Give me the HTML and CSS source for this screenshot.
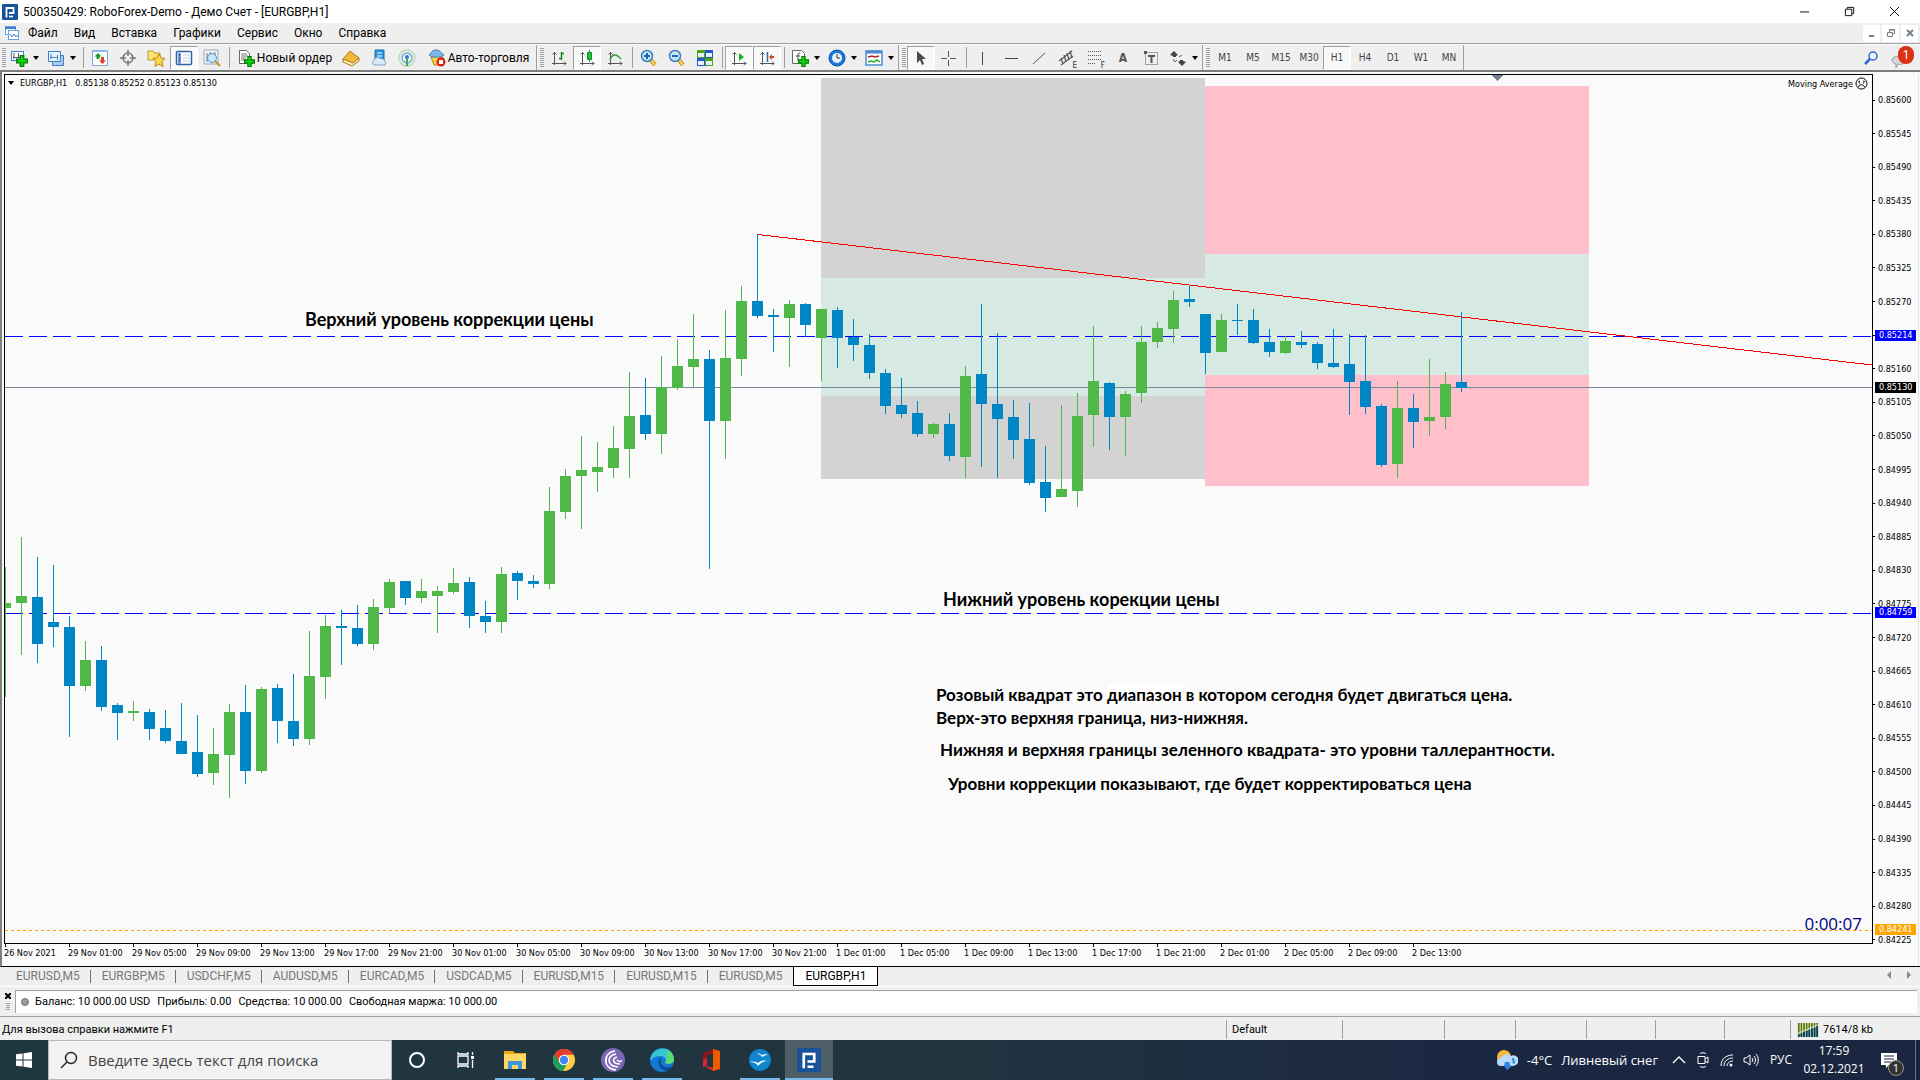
FILE: index.html
```html
<!DOCTYPE html>
<html lang="ru">
<head>
<meta charset="utf-8">
<title>500350429: RoboForex-Demo</title>
<link rel="stylesheet" href="styles.css">
</head>
<body>
<svg class="defs" aria-hidden="true">
  <defs>
    <symbol id="logo" viewBox="0 0 16 16"><rect width="16" height="16" rx="1" fill="#17529a"/><path d="M4.500 13.500V4h7v5H7" fill="none" stroke="#fff" stroke-width="1.800"/><path d="M7 12.500h4" stroke="#fff" stroke-width="1.600"/></symbol>
    <symbol id="plus" viewBox="0 0 10 10"><path d="M3.500.5h3v3h3v3h-3v3h-3v-3h-3v-3h3z" fill="#12d312" stroke="#067a06"/></symbol>
    <symbol id="caret" viewBox="0 0 6 4"><path d="M0 0h6L3 4z" fill="#000"/></symbol>
    <symbol id="axes" viewBox="0 0 16 16"><path d="M3.500 1v13M1 12.500h14M1.500 3.500l2-2 2 2M13 10.500l2 2-2 2" fill="none" stroke="#555"/></symbol>
    <symbol id="lens" viewBox="0 0 18 18"><path d="M10 10l5 6" stroke="#b98512" stroke-width="4"/><path d="M10 10l5 6" stroke="#ffd75a" stroke-width="2"/><circle cx="7" cy="7" r="5.500" fill="#c6e6fa" stroke="#3b7fc4" stroke-width="1.500"/></symbol>
  </defs>
</svg>

<header class="titlebar">
  <svg class="i16"><use href="#logo"/></svg>
  <h1 class="title">500350429: RoboForex-Demo - Демо Счет - [EURGBP,H1]</h1>
  <div class="winctl">
    <button aria-label="Свернуть"><svg viewBox="0 0 12 12"><path d="M1 6.500h10" stroke="#000"/></svg></button>
    <button aria-label="Восстановить"><svg viewBox="0 0 12 12"><path d="M1.500 3.500h7v7h-7zM3.500 3V1.500h7v7H9" fill="none" stroke="#000"/></svg></button>
    <button aria-label="Закрыть"><svg viewBox="0 0 12 12"><path d="M1 1l10 10M11 1L1 11" stroke="#000"/></svg></button>
  </div>
</header>

<nav class="menubar">
  <svg class="i16" viewBox="0 0 16 16"><rect x="1.500" y="1.500" width="10" height="8" fill="#fff" stroke="#6b9fe0"/><path d="M1 3h11" stroke="#3c7bd0" stroke-width="2"/><rect x="4.500" y="5.500" width="10" height="9" fill="#fff" stroke="#6b9fe0"/><path d="M6 9l2 3 2-3 2 3 2-2" fill="none" stroke="#3c7bd0"/></svg>
  <button>Файл</button><button>Вид</button><button>Вставка</button><button>Графики</button><button>Сервис</button><button>Окно</button><button>Справка</button>
  <div class="mdictl">
    <button aria-label="Свернуть окно"><svg viewBox="0 0 10 10"><path d="M2 8h5" stroke="#708090" stroke-width="2"/></svg></button>
    <button aria-label="Восстановить окно"><svg viewBox="0 0 10 10"><path d="M1.500 4.500h5v4h-5zM3.500 4V1.500h5v4H7M3 2h6" fill="none" stroke="#708090"/></svg></button>
    <button aria-label="Закрыть окно"><svg viewBox="0 0 10 10"><path d="M2 2l6 6M8 2L2 8" stroke="#708090" stroke-width="2"/></svg></button>
  </div>
</nav>

<div class="toolbar">
  <span class="grip"></span>
  <button class="tb drop" aria-label="Новый график"><svg viewBox="0 0 18 18"><rect x="1.500" y="2.500" width="12" height="9" fill="#fff" stroke="#3f7fc8"/><path d="M4 4v6M3 8.500h8M8.500 4v5" stroke="#557"/><use href="#plus" x="6" y="6" width="12" height="12"/></svg><svg class="caret"><use href="#caret"/></svg></button>
  <button class="tb drop" aria-label="Профили"><svg viewBox="0 0 18 18"><path d="M5.500 6.500h11v10h-11z" fill="#a9cdf0" stroke="#3f7fc8"/><path d="M1.500 2.500h12v10h-12z" fill="#e4f1fd" stroke="#3f7fc8"/><path d="M4 5v5M3 8.500h8M10.500 6v5" stroke="#4c83c3"/></svg><svg class="caret"><use href="#caret"/></svg></button>
  <span class="sep"></span>
  <button class="tb" aria-label="Обзор рынка"><svg viewBox="0 0 18 18"><rect x="1.500" y="1.500" width="15" height="15" fill="#fff" stroke="#7fa7d8"/><path d="M1 2h16" stroke="#8cb8ee" stroke-width="2"/><path d="M7 4l3.500 3.500H8.500V10h-3V7.500h-2z" fill="#159a2c"/><path d="M11.500 15L8 11.500h2V8h3v3.500h2z" fill="#e5402a"/></svg></button>
  <button class="tb" aria-label="Окно данных"><svg viewBox="0 0 18 18"><circle cx="9" cy="9" r="5" fill="none" stroke="#777" stroke-width="1.500"/><path d="M9 1v6M9 11v6M1 9h6M11 9h6" stroke="#777" stroke-width="1.500"/></svg></button>
  <button class="tb" aria-label="Навигатор"><svg viewBox="0 0 18 18"><path d="M1 2h5l1 2h6v7H1z" fill="#ffe27a" stroke="#c39a24"/><path d="M12 5l2 4 4 .5-3 3 1 5-4-2.500-4 2.500 1-5-3-3 4-.5z" fill="#ffd84a" stroke="#b98512"/></svg></button>
  <button class="tb on" aria-label="Терминал"><svg viewBox="0 0 18 18"><rect x="1.500" y="2.500" width="15" height="13" rx="1" fill="#fff" stroke="#2f62a8" stroke-width="1.500"/><path d="M3 4h3v11H3z" fill="#6f9cd8"/><path d="M8 6h7M8 9h7M8 12h7" stroke="#c4d4e6"/><path d="M4 6h1M4 9h1M4 12h1" stroke="#224"/></svg></button>
  <button class="tb" aria-label="Тестер стратегий"><svg viewBox="0 0 18 18"><path d="M1 1h14v14H1z" fill="#f3f6fa" stroke="#9ab"/><path d="M4 4v9M7 3v8M12 3v5" stroke="#667"/><circle cx="9" cy="9" r="4.500" fill="#c6e6fa" stroke="#5a93c9"/><path d="M12 12l5 5" stroke="#c8951c" stroke-width="2"/></svg></button>
  <span class="sep"></span>
  <button class="tb order"><svg viewBox="0 0 18 18"><path d="M2.500 1.500h7l3 3v10h-10z" fill="#fff" stroke="#666"/><path d="M4 5h6M4 7h7M4 9h5M4 11h4" stroke="#777"/><use href="#plus" x="7" y="7" width="11" height="11"/></svg>Новый ордер</button>
  <button class="tb" aria-label="MetaEditor"><svg viewBox="0 0 18 18"><path d="M1 10L8 2l9 7-6 6z" fill="#f0b93a" stroke="#a97413"/><path d="M1 10v3l9 4 7-5V9l-6 5z" fill="#fff1c0" stroke="#a97413"/></svg></button>
  <button class="tb" aria-label="Маркет"><svg viewBox="0 0 18 18"><path d="M5 1h9v11H5z" fill="#2c95e0" stroke="#1b6cb0"/><path d="M7 4h5M7 7h5" stroke="#fff"/><path d="M4 16a3 3 0 010-5 4 4 0 017-1 3 3 0 014 3 2 2 0 010 3z" fill="#dce9f6" stroke="#7d9fc4"/></svg></button>
  <button class="tb" aria-label="Сигналы"><svg viewBox="0 0 18 18"><g fill="none"><circle cx="9" cy="9" r="8" stroke="#b5dcb7" stroke-width="1.500"/><circle cx="9" cy="9" r="5" stroke="#79a9d6" stroke-width="1.500"/></g><circle cx="9" cy="8" r="2" fill="#2f7fd0"/><path d="M9 9v8" stroke="#3fae49" stroke-width="2"/></svg></button>
  <button class="tb auto"><svg viewBox="0 0 18 18"><path d="M3 8l6-1 7 2-4 7H6z" fill="#ffd049" stroke="#b88414"/><path d="M1 6c2-1 2-5 7-5s5 4 8 5c-3 3-12 3-15 0z" fill="#7db8e8" stroke="#3e7fb8"/><circle cx="13" cy="13" r="4.500" fill="#dc2414"/><rect x="11" y="11" width="4" height="4" fill="#fff"/></svg>Авто-торговля</button>
  <span class="split"></span>
  <button class="tb" aria-label="Бары"><svg viewBox="0 0 18 18"><use href="#axes" x="1" y="2" width="16" height="16"/><path d="M11.500 3v8M9 9.500h2M12 4.500h2" stroke="#118a2a" stroke-width="1.500"/></svg></button>
  <button class="tb on" aria-label="Свечи"><svg viewBox="0 0 18 18"><use href="#axes" x="1" y="2" width="16" height="16"/><path d="M11.500 1v12" stroke="#118a2a"/><path d="M9.500 3.500h4v7h-4z" fill="#12c738" stroke="#118a2a"/></svg></button>
  <button class="tb" aria-label="Линия"><svg viewBox="0 0 18 18"><use href="#axes" x="1" y="2" width="16" height="16"/><path d="M4 11c2-6 6-7 11-1" fill="none" stroke="#2e9b40" stroke-width="1.500"/></svg></button>
  <span class="sep"></span>
  <button class="tb" aria-label="Увеличить"><svg viewBox="0 0 18 18"><use href="#lens"/><path d="M4 7h6M7 4v6" stroke="#1e66b5" stroke-width="2"/></svg></button>
  <button class="tb" aria-label="Уменьшить"><svg viewBox="0 0 18 18"><use href="#lens"/><path d="M4 7h6" stroke="#1e66b5" stroke-width="2"/></svg></button>
  <button class="tb" aria-label="Плитка"><svg viewBox="0 0 18 18"><path d="M1 1h8v8H1zM9 9h8v8H9z" fill="#4ba80e"/><path d="M9 1h8v8H9zM1 9h8v8H1z" fill="#2456d8"/><path d="M2 4h6v4H2zM10 4h6v4h-6zM2 12h6v4H2zM10 12h6v4h-6z" fill="#e8f2ff"/></svg></button>
  <span class="sep"></span>
  <button class="tb on" aria-label="Автопрокрутка"><svg viewBox="0 0 18 18"><use href="#axes" x="1" y="2" width="16" height="16"/><path d="M9 4l5 4-5 4z" fill="#18b02c"/></svg></button>
  <button class="tb on" aria-label="Сдвиг графика"><svg viewBox="0 0 18 18"><use href="#axes" x="1" y="2" width="16" height="16"/><path d="M9.500 3v10" stroke="#2a67a8" stroke-width="1.500"/><path d="M11 8l3-3v2h2v2h-2v2z" fill="#d44817"/></svg></button>
  <span class="sep"></span>
  <button class="tb drop" aria-label="Индикаторы"><svg viewBox="0 0 18 18"><path d="M1.500 1.500h9l3 3v10h-12z" fill="#fff" stroke="#666"/><path d="M9 4c-3 0-2 3-2 8M5 7h4" fill="none" stroke="#444"/><use href="#plus" x="7" y="7" width="11" height="11"/></svg><svg class="caret"><use href="#caret"/></svg></button>
  <button class="tb drop" aria-label="Периоды"><svg viewBox="0 0 18 18"><circle cx="9" cy="9" r="8" fill="#1c77dd" stroke="#0d4fa4"/><circle cx="9" cy="9" r="5" fill="#e6f2ff"/><path d="M9 5v4h3" fill="none" stroke="#333"/></svg><svg class="caret"><use href="#caret"/></svg></button>
  <button class="tb drop" aria-label="Шаблоны"><svg viewBox="0 0 18 18"><rect x="1" y="2" width="16" height="14" fill="#fff" stroke="#4d8cd0" stroke-width="1.500"/><path d="M1 3h16" stroke="#4d8cd0" stroke-width="3"/><path d="M3 8l4-1 3 1 4-1" fill="none" stroke="#a22" stroke-width="1.500"/><path d="M3 13l3-1 3 1 3-2 3 2" fill="none" stroke="#2a2" stroke-width="1.500"/></svg><svg class="caret"><use href="#caret"/></svg></button>
  <span class="split"></span>
  <button class="tb on" aria-label="Курсор"><svg viewBox="0 0 18 18"><path d="M5 2v12l3-3 2 5 2-1-2-5h4z" fill="#4a4a4a"/></svg></button>
  <button class="tb" aria-label="Перекрестие"><svg viewBox="0 0 18 18"><path d="M8.500 2v6M8.500 11v6M1 9.500h6M10 9.500h6" stroke="#555"/></svg></button>
  <span class="sep"></span>
  <button class="tb" aria-label="Вертикальная линия"><svg viewBox="0 0 18 18"><path d="M8.500 3v13" stroke="#444"/></svg></button>
  <button class="tb" aria-label="Горизонтальная линия"><svg viewBox="0 0 18 18"><path d="M3 9.500h13" stroke="#444"/></svg></button>
  <button class="tb" aria-label="Трендовая линия"><svg viewBox="0 0 18 18"><path d="M3 15L15 4" stroke="#555"/></svg></button>
  <button class="tb" aria-label="Канал"><svg viewBox="0 0 18 18"><path d="M1 12L14 2M3 16L15 7M3 9l2 6M6 6l2 7M9 4l2 7M12 2l2 7" stroke="#555" stroke-width="1.200"/></svg><sub>E</sub></button>
  <button class="tb" aria-label="Фибоначчи"><svg viewBox="0 0 18 18"><path d="M2 2.500h14M2 6.500h14M2 10.500h14M2 14.500h8" stroke="#555" stroke-dasharray="1 1"/></svg><sub>F</sub></button>
  <button class="tb glyph">A</button>
  <button class="tb" aria-label="Метка"><svg viewBox="0 0 18 18"><rect x="3.500" y="3.500" width="12" height="12" fill="none" stroke="#555" stroke-dasharray="1 1"/><path d="M2 2h3v3H2z" fill="#555"/><path d="M6 7h7M9.500 7v7" stroke="#555" stroke-width="2"/></svg></button>
  <button class="tb drop" aria-label="Стрелки"><svg viewBox="0 0 18 18"><path d="M5 2l4 4-2 1v1H4V7L1 6zM13 17l-4-4 2-1v-1h3v1l3 1z" fill="#444"/><path d="M4 10l2 3 2-2M10 8l3-2" fill="none" stroke="#666"/></svg><svg class="caret"><use href="#caret"/></svg></button>
  <span class="split"></span>
  <button class="tb tf">M1</button><button class="tb tf">M5</button><button class="tb tf">M15</button><button class="tb tf">M30</button><button class="tb tf on">H1</button><button class="tb tf">H4</button><button class="tb tf">D1</button><button class="tb tf">W1</button><button class="tb tf">MN</button>
  <span class="end"></span>
  <div class="tbright">
    <button aria-label="Поиск"><svg viewBox="0 0 14 14"><circle cx="9" cy="5" r="4" fill="#eaf3ff" stroke="#2c66cf" stroke-width="1.500"/><path d="M6 8l-5 5" stroke="#2c66cf" stroke-width="2.500"/></svg></button>
    <button class="chat" aria-label="Сообщения"><svg viewBox="0 0 24 24"><path d="M2 14c0-5 14-5 14 0 0 4-5 5-8 4l-2 4v-4c-2 0-4-2-4-4z" fill="#d6d6dc" stroke="#9a9aa2"/></svg><span class="badge">1</span></button>
  </div>
</div>

<main class="chart">
  <div class="plot">
    <svg class="canvas" shape-rendering="crispEdges">
      <g transform="translate(-5 -75)">
        <rect x="821" y="78" width="384" height="401" fill="#d3d3d3"/>
        <rect x="1205" y="86" width="384" height="400" fill="#ffc0cb"/>
        <rect x="821" y="278" width="384" height="118" fill="#d6e9e2"/>
        <rect x="1205" y="254" width="384" height="121" fill="#d6e9e2"/>
        <path d="M821 336.500h768" stroke="#fafafa"/>
        <path d="M5 336.500h4000M5 613.500h4000" stroke="#0000ff" stroke-dasharray="18 6"/>
        <path d="M5 387.500h4000" stroke="#778899"/>
        <path d="M5 930.500h4000" stroke="#ffa500" stroke-dasharray="3 3"/>
        <path d="M758 234.500L1872 365" stroke="#ff0000"/>
        <path d="M1491 75h12l-6 6z" fill="#708090"/>
        <g id="candles"></g>
      </g>
    </svg>
    <div class="symbol"><svg class="caret"><use href="#caret"/></svg><span>EURGBP,H1</span><span>0.85138 0.85252 0.85123 0.85130</span></div>
    <div class="expert">Moving Average<svg viewBox="0 0 13 13"><circle cx="6.500" cy="6.500" r="5.500" fill="none" stroke="#000"/><path d="M3 5l2-1M10 5L8 4M4 6h1M8 6h1M3.500 10c1-3 5-3 6 0" fill="none" stroke="#000"/></svg></div>
    <p class="note large upper">Верхний уровень коррекции цены</p>
    <p class="note large lower">Нижний уровень корекции цены</p>
    <p class="note range">Розовый квадрат это <span class="patch">диапазон</span> в котором сегодня будет двигаться цена.<br>Верх-это верхняя граница, низ-нижняя.</p>
    <p class="note green">Нижняя и верхняя границы зеленного квадрата- это уровни таллерантности.</p>
    <p class="note levels">Уровни коррекции показывают, где будет корректироваться цена</p>
    <div class="timer">0:00:07</div>
  </div>
  <ol class="prices">
    <li>0.85600</li><li>0.85545</li><li>0.85490</li><li>0.85435</li><li>0.85380</li><li>0.85325</li><li>0.85270</li><li>0.85215</li><li>0.85160</li><li>0.85105</li><li>0.85050</li><li>0.84995</li><li>0.84940</li><li>0.84885</li><li>0.84830</li><li>0.84775</li><li>0.84720</li><li>0.84665</li><li>0.84610</li><li>0.84555</li><li>0.84500</li><li>0.84445</li><li>0.84390</li><li>0.84335</li><li>0.84280</li><li>0.84225</li>
  </ol>
  <div class="tags"><span class="tag t1">0.85214</span><span class="tag t2">0.85130</span><span class="tag t3">0.84759</span><span class="tag t4">0.84241</span></div>
  <ol class="times">
    <li>26 Nov 2021</li><li>29 Nov 01:00</li><li>29 Nov 05:00</li><li>29 Nov 09:00</li><li>29 Nov 13:00</li><li>29 Nov 17:00</li><li>29 Nov 21:00</li><li>30 Nov 01:00</li><li>30 Nov 05:00</li><li>30 Nov 09:00</li><li>30 Nov 13:00</li><li>30 Nov 17:00</li><li>30 Nov 21:00</li><li>1 Dec 01:00</li><li>1 Dec 05:00</li><li>1 Dec 09:00</li><li>1 Dec 13:00</li><li>1 Dec 17:00</li><li>1 Dec 21:00</li><li>2 Dec 01:00</li><li>2 Dec 05:00</li><li>2 Dec 09:00</li><li>2 Dec 13:00</li>
  </ol>
</main>

<div class="tabs">
  <button>EURUSD,M5</button><button>EURGBP,M5</button><button>USDCHF,M5</button><button>AUDUSD,M5</button><button>EURCAD,M5</button><button>USDCAD,M5</button><button>EURUSD,M15</button><button>EURUSD,M15</button><button class="last">EURUSD,M5</button><button class="active">EURGBP,H1</button>
  <div class="scroll"><button aria-label="Назад"><svg viewBox="0 0 4 8"><path d="M4 0v8L0 4z" fill="#888"/></svg></button><button aria-label="Вперед"><svg viewBox="0 0 4 8"><path d="M0 0v8l4-4z" fill="#888"/></svg></button></div>
</div>

<section class="account">
  <div class="side"><button aria-label="Закрыть терминал"><svg viewBox="0 0 6 6"><path d="M0 0l6 6M6 0L0 6" stroke="#000" stroke-width="2"/></svg></button><span class="grip flat"></span></div>
  <div class="balance"><i class="dot"></i><span>Баланс: 10 000.00 USD</span><span>Прибыль: 0.00</span><span>Средства: 10 000.00</span><span>Свободная маржа: 10 000.00</span></div>
</section>

<footer class="status">
  <span class="hint">Для вызова справки нажмите F1</span>
  <span class="cell c116">Default</span><span class="cell c102"></span><span class="cell c71"></span><span class="cell c71"></span><span class="cell c69"></span><span class="cell c69"></span><span class="cell c66"></span>
  <span class="cell traffic"><svg viewBox="0 0 24 16"><path d="M1.500 0v16M4.500 0v16M7.500 0v16M10.500 0v16M13.500 0v16M16.500 0v16M19.500 0v16M22.500 0v16" stroke="#5b7a00" stroke-width="2"/><path d="M1.500 13v3M4.500 12v4M7.500 10v6M10.500 9v7M13.500 8v8M16.500 6v10M19.500 5v11M22.500 3v13" stroke="#004060" stroke-width="2"/><path d="M0 12L24 2" stroke="#efefef"/></svg>7614/8 kb</span>
</footer>

<div class="taskbar">
  <button class="start" aria-label="Пуск"><svg viewBox="0 0 16 16"><path d="M0 2.300l6.500-.9v6.100H0zM7.500 1.200L16 0v7.500H7.500zM0 8.500h6.500v6.100L0 13.700zM7.500 8.500H16V16l-8.500-1.200z" fill="#fff"/></svg></button>
  <label class="search"><svg viewBox="0 0 18 18"><circle cx="11" cy="7" r="5.500" fill="none" stroke="#222" stroke-width="1.400"/><path d="M7 11l-6 6" stroke="#222" stroke-width="1.400"/></svg><input type="text" placeholder="Введите здесь текст для поиска" aria-label="Поиск"></label>
  <div class="apps">
    <button aria-label="Кортана"><svg viewBox="0 0 24 24"><circle cx="12" cy="12" r="7" fill="none" stroke="#fff" stroke-width="2"/></svg></button>
    <button aria-label="Представление задач"><svg viewBox="0 0 24 24"><path d="M4 8h10v8H4zM4 4v2h10V4M4 20v-2h10v2M18.500 4v3M18.500 12v8" fill="none" stroke="#fff" stroke-width="1.300"/><path d="M17 8h3v3h-3z" fill="#fff"/></svg></button>
    <button class="run" aria-label="Проводник"><svg viewBox="0 0 24 24"><path d="M1 3h9l2 2h11v16H1z" fill="#e9a818"/><path d="M1 6h22v15H1z" fill="#ffd765"/><path d="M5 21v-8h14v8h-4v-4H9v4z" fill="#3a96dd"/></svg></button>
    <button class="run" aria-label="Chrome"><svg viewBox="0 0 24 24"><circle cx="12" cy="12" r="11" fill="#ffcd40"/><path d="M12 12L2.500 6.500A11 11 0 0121.500 6.500H12z" fill="#e33b2e"/><path d="M12 12L2.500 6.500A11 11 0 0011 23l5-8.500z" fill="#18a05d"/><path d="M12 6.500h9.500a11 11 0 00-19 0L7.300 14.700z" fill="#e33b2e"/><circle cx="12" cy="12" r="5.300" fill="#fff"/><circle cx="12" cy="12" r="4.200" fill="#4285f4"/></svg></button>
    <button class="run" aria-label="BitTorrent"><svg viewBox="0 0 24 24"><circle cx="12" cy="12" r="12" fill="#7a68b4"/><g fill="none" stroke="#fff" stroke-width="1.700"><path d="M14 3C2 4 1 21 15 22"/><path d="M15 6C6 7 5 18 17 19"/><path d="M16 9c-5 1-5 7 3 7"/><path d="M17 12c-1 0 0 2 4 1"/></g></svg></button>
    <button class="run" aria-label="Edge"><svg viewBox="0 0 24 24"><circle cx="12" cy="12" r="12" fill="#1479d4"/><path d="M1 9C4-1 22-4 24 11c0 5-5 6-9 4 2-3 1-6-4-7-4 0-8 1-11 5z" fill="#38c6d0"/><path d="M17 2c5 2 7 6 7 10-1 4-6 4-9 3 2-3 4-8 2-13z" fill="#5ddb6b"/><path d="M11 9c-5 4-2 13 6 14 2-1 4-2 6-5-6 3-14 1-12-9z" fill="#0c4a94"/></svg></button>
    <button aria-label="Office"><svg viewBox="0 0 24 24"><path d="M4 6l10-5v4L8 7v10l-4 2z" fill="#d4283a"/><path d="M4 6l10-5v4L8 7v3L4 12z" fill="#8f1414"/><path d="M14 1l7 2v18l-7 2z" fill="#ee5a00"/><path d="M5 18l9 1.500V23z" fill="#e0252f"/></svg></button>
    <button class="run" aria-label="OpenOffice"><svg viewBox="0 0 24 24"><circle cx="12" cy="12" r="11" fill="#0e85cd"/><path d="M9 6c2-1 3 0 5 1 2-1 4-1 6 0-3 0-4 1-6 2-1-2-3-3-5-3zM2 14c4-1 6 0 8 1 3-3 6-3 10-2-5 0-7 2-10 5-2-3-4-4-8-4z" fill="#fff"/></svg></button>
    <button class="run current" aria-label="RoboForex"><svg viewBox="0 0 16 16"><use href="#logo"/></svg></button>
  </div>
  <div class="tray">
    <button class="weather"><svg viewBox="0 0 22 22"><circle cx="8" cy="8" r="7" fill="#f8b83a"/><path d="M5 17a4 4 0 010-8 6 6 0 0110-2 5 5 0 015 9l-3 1z" fill="#b9dcfa"/><path d="M9 13h4l2 5-4 3-3-4zM16 9h2l1 5-2 1z" fill="#2a86e0"/></svg><span>-4°C</span><span>Ливневый снег</span></button>
    <button aria-label="Скрытые значки"><svg class="i16" viewBox="0 0 16 16"><path d="M2 11l6-6 6 6" fill="none" stroke="#fff" stroke-width="1.300"/></svg></button>
    <button aria-label="Meet"><svg class="i16" viewBox="0 0 16 16"><path d="M3 4.500h7v7H3zM10 7l3-2v6l-3-2M5 1.500c2-1 4-1 6 0M5 14.500c2 1 4 1 6 0" fill="none" stroke="#fff"/></svg></button>
    <button aria-label="Сеть"><svg class="i16" viewBox="0 0 16 16"><g fill="none" stroke="#fff"><path d="M2 14C2 7 7 3 14 3M5 14c0-5 4-8 9-8M8 14c0-3 3-5 6-5"/></g><circle cx="12" cy="13" r="1.500" fill="#fff"/></svg></button>
    <button aria-label="Громкость"><svg class="i16" viewBox="0 0 16 16"><path d="M1 6h2l4-3v10l-4-3H1zM9 6c1 1 1 3 0 4M11 4c2 2 2 6 0 8M13 2c3 3 3 9 0 12" fill="none" stroke="#fff"/></svg></button>
    <button class="lang">РУС</button>
    <button class="clock"><time>17:59</time><time>02.12.2021</time></button>
    <button class="notify" aria-label="Уведомления"><svg viewBox="0 0 18 18"><path d="M1 2h16v12H9l-3 3v-3H1z" fill="#fff"/><path d="M4 5h10M4 8h10M4 11h7" stroke="#1b2942"/></svg><span class="count">1</span></button>
    <span class="peek"></span>
  </div>
</div>
<script src="chart.js"></script>
</body>
</html>
```
FILE: styles.css
```css
* { box-sizing: border-box; }
html, body { height: 100%; }
body {
  margin: 0;
  display: flex;
  flex-direction: column;
  background: #efefef;
  color: #000;
  font: 12px/16px Roboto, "Noto Sans", sans-serif;
  overflow: hidden;
}
button {
  margin: 0; padding: 0; border: 0;
  background: none; color: inherit; font: inherit;
  display: flex; align-items: center; justify-content: center;
  white-space: nowrap;
}
ol { list-style: none; margin: 0; padding: 0; }
p, h1 { margin: 0; }
svg { display: block; flex: none; }
.defs { position: absolute; width: 0; height: 0; }
.i16 { width: 16px; height: 16px; }
.caret { width: 6px; height: 4px; }

.titlebar { display: flex; align-items: center; height: 23px; flex: none; background: #fff; padding: 0 3px 0 2px; gap: 5px; }
.title { font-size: 12px; font-weight: 400; }
.winctl { display: flex; margin-left: auto; }
.winctl button { width: 45px; height: 23px; }
.winctl svg { width: 11px; height: 11px; }

.menubar { display: flex; align-items: center; height: 21px; flex: none; border-bottom: 1px solid #a0a0a0; padding: 0 2px 0 4px; }
.menubar > button { padding: 0 8px; }
.mdictl { display: flex; gap: 2px; margin-left: auto; }
.mdictl button { width: 17px; height: 17px; background: #fff; }
.mdictl svg { width: 10px; height: 10px; }

.toolbar { display: flex; align-items: center; height: 28px; flex: none; border-top: 1px solid #fff; border-bottom: 2px solid #7d7d7d; }
.grip { width: 4px; height: 20px; margin: 0 0 0 2px; background: repeating-linear-gradient(#a0a0a0 0 1px, transparent 1px 2px); flex: none; }
.sep { width: 6px; height: 21px; flex: none; background: linear-gradient(#a0a0a0, #a0a0a0) center / 1px 100% no-repeat; }
.split { width: 9px; height: 25px; flex: none; border-left: 1px solid #a0a0a0; position: relative; }
.split::after { content: ""; position: absolute; left: 3px; top: 3px; width: 4px; height: 20px; background: repeating-linear-gradient(#a0a0a0 0 1px, transparent 1px 2px); }
.end { width: 1px; height: 25px; background: #a0a0a0; }
.tb { width: 28px; height: 24px; flex: none; position: relative; }
.tb > svg:first-child { width: 18px; height: 18px; }
.drop { width: 37px; gap: 5px; }
.tb.order { width: 105px; gap: 2px; }
.tb.auto { width: 115px; gap: 2px; }
.tb.on { background: #f9f9f9; border: 1px solid; border-color: #a0a0a0 #fff #fff #a0a0a0; }
.tb sub { position: absolute; right: 4px; bottom: 0; font: 8px/8px "DejaVu Sans Condensed", sans-serif; color: #333; }
.tb.glyph { font: bold 12px/16px "DejaVu Sans Condensed", sans-serif; color: #555; }
.tb.tf { font: 10px/12px "DejaVu Sans Condensed", "DejaVu Sans", sans-serif; color: #444; }
.tbright { display: flex; align-items: center; margin-left: auto; gap: 12px; padding-right: 6px; }
.tbright svg { width: 14px; height: 14px; }
.tbright .chat { position: relative; width: 24px; height: 24px; }
.tbright .chat svg { width: 24px; height: 24px; }
.badge { position: absolute; right: 0; top: 0; width: 16px; height: 18px; border-radius: 9px; background: #dc2f14; color: #fff; line-height: 18px; }

.chart {
  flex: 1; min-height: 0;
  display: grid;
  grid-template: minmax(0, 1fr) 22px / minmax(0, 1fr) 46px;
  padding: 2px 1px 0 2px;
  border-left: 2px solid #808080;
  border-bottom: 1px solid #000;
  background: #fafafa;
  position: relative;
  font: 9px/12px "DejaVu Sans Condensed", "DejaVu Sans", sans-serif;
}
.plot { position: relative; border: 1px solid #000; overflow: hidden; }
.canvas { width: 100%; height: 100%; }
.symbol { position: absolute; left: 3px; top: 2px; display: flex; align-items: center; gap: 8px; }
.symbol .caret { margin-right: -2px; }
.expert { position: absolute; right: 4px; top: 2px; display: flex; align-items: center; gap: 2px; }
.expert svg { width: 13px; height: 13px; }
.note { position: absolute; font: bold 17px/23px Lato, "Open Sans", sans-serif; white-space: nowrap; }
.note.large { font-size: 18px; }
.upper { left: 300px; top: 233px; }
.lower { left: 938px; top: 513px; }
.range { left: 931px; top: 608px; }
.green { left: 935px; top: 663px; }
.levels { left: 943px; top: 697px; }
.patch { background: #fff; }
.timer { position: absolute; right: 10px; bottom: 9px; font: 17px/20px "Open Sans", sans-serif; color: #000080; }
.prices { grid-row: 1 / 3; grid-column: 2; display: flex; flex-direction: column; justify-content: space-between; padding: 20px 0; border-right: 1px solid #e3e3e3; }
.prices li { display: flex; align-items: center; gap: 3px; height: 12px; }
.prices li::before { content: ""; width: 2px; height: 1px; background: #000; }
.tags { position: absolute; right: 4px; top: 0; width: 41px; color: #fff; }
.tag { position: absolute; left: 0; width: 41px; height: 11px; padding-left: 4px; line-height: 11px; }
.t1 { top: 258px; background: #00f; }
.t2 { top: 310px; background: #000; }
.t3 { top: 535px; background: #00f; }
.t4 { top: 852px; background: #ffa500; }
.times { grid-row: 2; grid-column: 1; display: flex; }
.times li { flex: none; width: 64px; white-space: nowrap; }
.times li::before { content: ""; display: block; width: 1px; height: 3px; margin-left: 1px; background: #000; }

.tabs { display: flex; height: 20px; flex: none; padding-left: 5px; color: #787878; border-bottom: 1px solid #fff; }
.tabs > button { padding: 0 11px; height: 18px; position: relative; }
.tabs > button:not(.active):not(.last)::after { content: ""; position: absolute; right: 0; top: 3px; width: 1px; height: 13px; background: #707070; }
.tabs > .active { background: #fff; color: #000; border: 1px solid #000; border-top: 0; height: 19px; }
.scroll { display: flex; margin-left: auto; gap: 16px; padding: 0 9px 4px 0; }
.scroll svg { width: 4px; height: 8px; }

.account { display: flex; height: 30px; flex: none; padding: 3px 3px 3px 0; border-bottom: 1px solid #a0a0a0; font-size: 11px; }
.side { width: 15px; display: flex; flex-direction: column; align-items: center; gap: 4px; padding-top: 3px; }
.side svg { width: 6px; height: 6px; }
.grip.flat { height: 8px; margin: 0; }
.balance { flex: 1; display: flex; align-items: center; gap: 7px; background: #fff; border-top: 1px solid #a0a0a0; border-left: 1px solid #a0a0a0; padding-left: 5px; }
.dot { width: 8px; height: 8px; border-radius: 50%; background: #999; border: 1px solid #777; margin-right: -1px; }

.status { display: flex; align-items: center; height: 23px; flex: none; padding-top: 2px; font-size: 11px; }
.hint { flex: 1; padding-left: 2px; }
.cell { height: 19px; flex: none; border-left: 1px solid #a0a0a0; padding-left: 5px; line-height: 19px; }
.c116 { width: 116px; } .c102 { width: 102px; } .c71 { width: 71px; } .c69 { width: 69px; } .c66 { width: 66px; }
.traffic { display: flex; align-items: center; gap: 3px; width: 130px; }
.traffic svg { width: 24px; height: 14px; }

.taskbar { display: flex; height: 40px; flex: none; background: linear-gradient(90deg, #20363f, #21343f 50%, #1b2842 75%, #1a2540); color: #fff; font-family: "Open Sans", "Noto Sans", sans-serif; }
.start { width: 48px; }
.start svg { width: 16px; height: 16px; }
.search { display: flex; align-items: center; width: 344px; gap: 10px; padding-left: 11px; background: #f2f2f2; border: 1px solid #b8b8b8; }
.search svg { width: 18px; height: 18px; }
.search input { flex: 1; min-width: 0; border: 0; padding: 0; background: none; font: 15px/20px "Open Sans", sans-serif; color: #444; outline: 0; }
.search input::placeholder { color: #444; opacity: 1; }
.apps { display: flex; gap: 1px; padding-left: 1px; }
.apps button { width: 48px; height: 40px; }
.apps svg { width: 24px; height: 24px; }
.run { background: linear-gradient(#76b9ed, #76b9ed) center bottom / 40px 2px no-repeat; }
.apps .current { background-color: #4d5e66; background-size: 48px 2px; }
.tray { display: flex; align-items: center; margin-left: auto; }
.tray > button { height: 40px; width: 24px; }
.tray .weather { width: auto; gap: 9px; font-size: 13px; margin-right: 9px; }
.weather svg { width: 22px; height: 22px; }
.tray .lang { width: 36px; }
.tray .clock { width: 62px; display: flex; flex-direction: column; line-height: 18px; }
.tray .notify { width: 52px; position: relative; }
.tray .clock { margin-left: 4px; margin-right: -2px; }
.notify svg { width: 18px; height: 18px; }
.count { position: absolute; right: 11px; bottom: 4px; width: 16px; height: 16px; border-radius: 50%; background: #333; border: 1px solid #999; font-size: 11px; line-height: 14px; }
.peek { width: 5px; height: 40px; border-left: 1px solid #6b7485; }
```
FILE: chart.js
```js
// Hourly candles: type (g = up, b = down), high, body top, body bottom, low.
const candles = `
g567,603,608,697 g537,596,603,655 b557,597,644,663 b565,622,627,647 b616,627,686,737 g641,660,686,691
b646,660,707,711 b703,705,713,740 g701,711,713,721 b709,712,729,740 b710,728,741,743 b703,741,754,754
b715,752,774,777 g728,754,773,785 g704,712,755,798 b685,712,771,784 g687,689,771,773 b684,688,721,743
b674,721,739,746 g631,676,739,745 g615,626,677,699 b610,626,628,665 b605,628,644,646 g599,607,644,650
g579,582,608,613 b581,581,598,605 g579,591,598,603 g586,591,596,633 g568,583,592,594 b577,582,616,628
b601,616,622,633 g567,574,622,633 b571,573,581,600 b575,581,584,588 g487,511,584,589 g469,476,512,519
g436,470,476,529 g442,467,472,492 g426,448,468,478 g372,416,449,478 b378,415,434,440 g356,387,434,454
g339,366,388,390 g314,359,367,387 b350,359,421,569 g310,358,421,459 g286,301,359,376 b234,301,316,318
b309,315,317,352 g300,304,318,367 b303,304,325,337 g309,309,338,381 b307,310,338,368 b319,337,345,361
b334,345,373,379 b369,373,406,414 b378,405,414,418 b401,413,434,437 g423,424,434,438 b413,424,456,461
g366,376,457,478 b304,374,404,467 b333,404,419,478 b400,417,440,459 b403,439,483,485 b446,482,498,512
g405,489,497,497 g393,416,491,507 g326,381,415,447 b382,383,417,450 g391,394,417,456 g326,342,393,403
g322,328,342,348 g291,300,329,343 b285,299,302,307 b314,314,353,374 g314,320,352,352 b304,320,321,335
b309,320,343,344 b329,342,352,357 g336,341,353,354 b331,342,345,348 b342,344,363,369 b329,363,367,368
b334,364,382,415 b335,381,407,414 b404,406,465,467 g381,408,464,478 b394,408,422,448 g359,417,421,436
g372,384,417,429 b312,382,388,392`.trim().split(/\s+/);

const layer = document.getElementById('candles');
const bar = (x, y, w, h, fill) => {
  const r = document.createElementNS('http://www.w3.org/2000/svg', 'rect');
  for (const [k, v] of Object.entries({ x, y, width: w, height: h, fill })) r.setAttribute(k, v);
  layer.append(r);
};
candles.forEach((c, i) => {
  const fill = c[0] === 'g' ? '#50b848' : '#0087c3';
  const [high, top, bottom, low] = c.slice(1).split(',').map(Number);
  const x = 5 + i * 16;
  bar(x, high, 1, low - high, fill);
  bar(x - 5, top, 11, bottom - top, fill);
});
```
